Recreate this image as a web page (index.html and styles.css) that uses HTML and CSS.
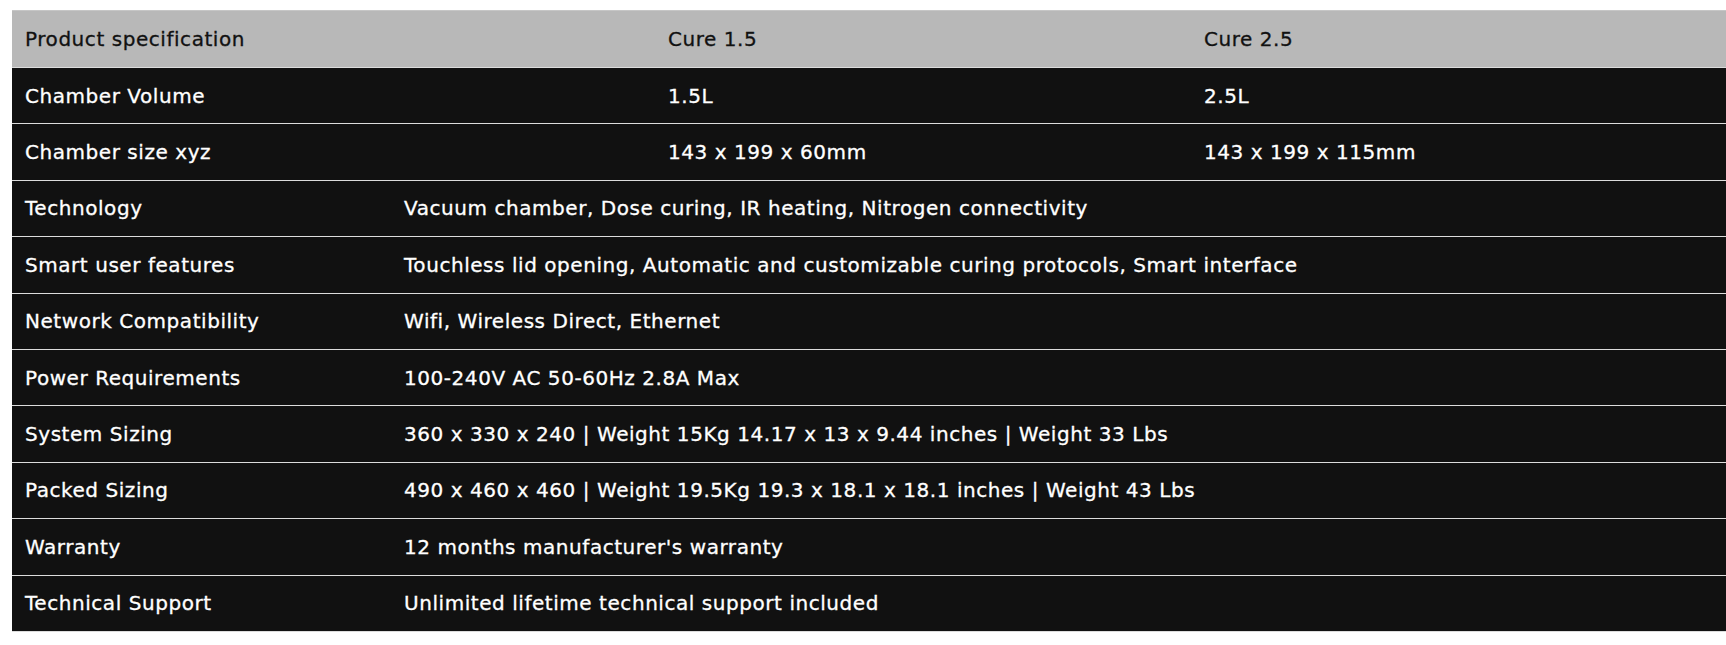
FILE: index.html
```html
<!DOCTYPE html>
<html>
<head>
<meta charset="utf-8">
<link rel="stylesheet" href="styles.css">
</head>
<body>
<div class="spec">
  <div class="row three head">
    <div class="cell">Product specification</div>
    <div class="cell">Cure 1.5</div>
    <div class="cell">Cure 2.5</div>
  </div>
  <div class="row three">
    <div class="cell">Chamber Volume</div>
    <div class="cell">1.5L</div>
    <div class="cell">2.5L</div>
  </div>
  <div class="row three">
    <div class="cell">Chamber size xyz</div>
    <div class="cell">143 x 199 x 60mm</div>
    <div class="cell">143 x 199 x 115mm</div>
  </div>
  <div class="row two">
    <div class="cell">Technology</div>
    <div class="cell">Vacuum chamber, Dose curing, IR heating, Nitrogen connectivity</div>
  </div>
  <div class="row two">
    <div class="cell">Smart user features</div>
    <div class="cell">Touchless lid opening, Automatic and customizable curing protocols, Smart interface</div>
  </div>
  <div class="row two">
    <div class="cell">Network Compatibility</div>
    <div class="cell">Wifi, Wireless Direct, Ethernet</div>
  </div>
  <div class="row two">
    <div class="cell">Power Requirements</div>
    <div class="cell">100-240V AC 50-60Hz 2.8A Max</div>
  </div>
  <div class="row two">
    <div class="cell">System Sizing</div>
    <div class="cell">360 x 330 x 240 | Weight 15Kg 14.17 x 13 x 9.44 inches | Weight 33 Lbs</div>
  </div>
  <div class="row two">
    <div class="cell">Packed Sizing</div>
    <div class="cell">490 x 460 x 460 | Weight 19.5Kg 19.3 x 18.1 x 18.1 inches | Weight 43 Lbs</div>
  </div>
  <div class="row two">
    <div class="cell">Warranty</div>
    <div class="cell">12 months manufacturer's warranty</div>
  </div>
  <div class="row two last">
    <div class="cell">Technical Support</div>
    <div class="cell">Unlimited lifetime technical support included</div>
  </div>
</div>
</body>
</html>
```

FILE: styles.css
```css
html, body {
  margin: 0;
  padding: 0;
  background: #ffffff;
}
body {
  padding: 10px 0 0 12px;
  font-family: "DejaVu Sans", "Inter", sans-serif;
  font-size: 20px;
  letter-spacing: 0.55px;
}
.spec {
  display: flex;
  flex-direction: column;
  border-top: 1px solid #c6c6c6;
}
.row {
  display: grid;
  height: 56.4px;
  box-sizing: border-box;
  border-top: 1px solid #dcdcdc;
  background: #111111;
  color: #ffffff;
  align-items: center;
}
.row.head {
  height: 56px;
  border-top: 0;
  background: #b8b8b8;
  color: #111111;
}
.row.last {
  border-bottom: 1px solid #dcdcdc;
  height: 57.4px;
}
.three {
  grid-template-columns: 643px 536px 1fr;
}
.two {
  grid-template-columns: 379px 1fr;
}
.cell {
  padding-left: 13px;
  white-space: nowrap;
  -webkit-text-stroke: 0.3px currentColor;
}
```
